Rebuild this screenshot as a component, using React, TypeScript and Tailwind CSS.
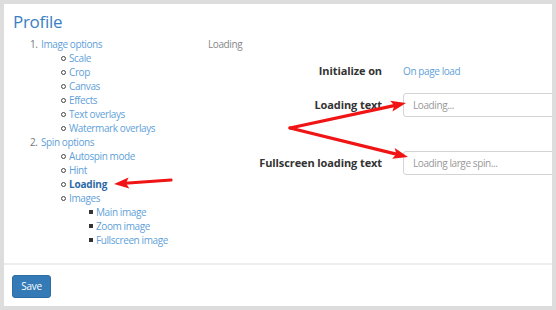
import React from 'react';

type Item = { label: string; level: number; num?: string; active?: boolean };

const items: Item[] = [
  { label: 'Image options', level: 1, num: '1.' },
  { label: 'Scale', level: 2 },
  { label: 'Crop', level: 2 },
  { label: 'Canvas', level: 2 },
  { label: 'Effects', level: 2 },
  { label: 'Text overlays', level: 2 },
  { label: 'Watermark overlays', level: 2 },
  { label: 'Spin options', level: 1, num: '2.' },
  { label: 'Autospin mode', level: 2 },
  { label: 'Hint', level: 2 },
  { label: 'Loading', level: 2, active: true },
  { label: 'Images', level: 2 },
  { label: 'Main image', level: 3 },
  { label: 'Zoom image', level: 3 },
  { label: 'Fullscreen image', level: 3 },
];

const NavRow: React.FC<{ item: Item }> = ({ item }) => {
  const linkClass = item.active
    ? 'font-bold text-[#2c6aa6] tracking-[-0.2px]'
    : 'text-[#5f9fd9]';

  if (item.level === 1) {
    return (
      <div className="flex h-[14px] items-center whitespace-nowrap pl-[17px]">
        <span className="w-[11px] text-[#777]">{item.num}</span>
        <span className={linkClass}>{item.label}</span>
      </div>
    );
  }
  if (item.level === 2) {
    return (
      <div className="flex h-[14px] items-center whitespace-nowrap pl-[48px]">
        <span className="mr-[3px] h-[5px] w-[5px] rounded-full border border-[#444]" />
        <span className={linkClass}>{item.label}</span>
      </div>
    );
  }
  return (
    <div className="flex h-[14px] items-center whitespace-nowrap pl-[76px]">
      <span className="mr-[3px] h-[4px] w-[4px] bg-[#333]" />
      <span className={linkClass}>{item.label}</span>
    </div>
  );
};

// arrow from (x1,y1) to tip (x2,y2)
const Arrow: React.FC<{ x1: number; y1: number; x2: number; y2: number }> = ({ x1, y1, x2, y2 }) => {
  const dx = x2 - x1;
  const dy = y2 - y1;
  const len = Math.sqrt(dx * dx + dy * dy);
  const ux = dx / len;
  const uy = dy / len;
  const headLen = 15;
  const headW = 5.5;
  const bx = x2 - ux * headLen;
  const by = y2 - uy * headLen;
  const pts = [
    `${x2},${y2}`,
    `${bx - uy * headW},${by + ux * headW}`,
    `${bx + ux * 3},${by + uy * 3}`,
    `${bx + uy * headW},${by - ux * headW}`,
  ].join(' ');
  return (
    <g>
      <line x1={x1} y1={y1} x2={bx + ux * 4} y2={by + uy * 4} stroke="#f01414" strokeWidth={3.2} strokeLinecap="round" />
      <polygon points={pts} fill="#f01414" />
    </g>
  );
};

export default function App() {
  return (
    <div className="relative h-[310px] w-[556px] bg-[#dddddd] p-1 font-['Open_Sans',sans-serif]">
      <div className="flex h-full flex-col overflow-hidden bg-white">
        <div className="flex-1 pl-[9px] pt-[6px]">
          <h1 className="text-[17px] leading-[24px] tracking-[-0.3px] text-[#3a7fc2]">Profile</h1>
          <div className="mt-[3px] flex text-[10px] leading-[14px] tracking-[-0.4px]">
            <div className="w-[195px] shrink-0">
              {items.map((it) => (
                <NavRow key={it.label} item={it} />
              ))}
            </div>
            <div className="flex-1">
              <div className="h-[14px] text-[#888]">Loading</div>
              <div className="mt-[8px] flex h-[24px] items-center">
                <div className="w-[174px] shrink-0 text-right text-[11px] font-bold tracking-[-0.1px] text-[#333]">Initialize on</div>
                <div className="ml-[21px] text-[#5f9fd9]">On page load</div>
              </div>
              <div className="mt-[10px] flex h-[24px] items-center">
                <div className="w-[174px] shrink-0 text-right text-[11px] font-bold tracking-[-0.1px] text-[#333]">Loading text</div>
                <input
                  className="ml-[21px] h-[24px] w-[180px] shrink-0 rounded-[3px] border border-[#d4d4d4] px-[9px] text-[10px] tracking-[-0.4px] placeholder:text-[#999] outline-none"
                  placeholder="Loading..."
                />
              </div>
              <div className="mt-[34px] flex h-[24px] items-center">
                <div className="w-[174px] shrink-0 text-right text-[11px] font-bold tracking-[-0.1px] text-[#333]">Fullscreen loading text</div>
                <input
                  className="ml-[21px] h-[24px] w-[180px] shrink-0 rounded-[3px] border border-[#d4d4d4] px-[9px] text-[10px] tracking-[-0.4px] placeholder:text-[#999] outline-none"
                  placeholder="Loading large spin..."
                />
              </div>
            </div>
          </div>
        </div>
        <div className="h-[43px] border-t-2 border-[#eeeeee] px-[8px] pt-[7px]">
          <button className="h-[23px] w-[39px] rounded-[3px] border border-[#2e6da4] bg-[#337ab7] text-[10px] tracking-[-0.3px] text-white">
            Save
          </button>
        </div>
      </div>
      <svg className="pointer-events-none absolute inset-0" width={556} height={310}>
        <Arrow x1={171} y1={180} x2={114} y2={184} />
        <Arrow x1={290} y1={128} x2={406} y2={103} />
        <Arrow x1={290} y1={128} x2={408} y2={157} />
      </svg>
    </div>
  );
}
